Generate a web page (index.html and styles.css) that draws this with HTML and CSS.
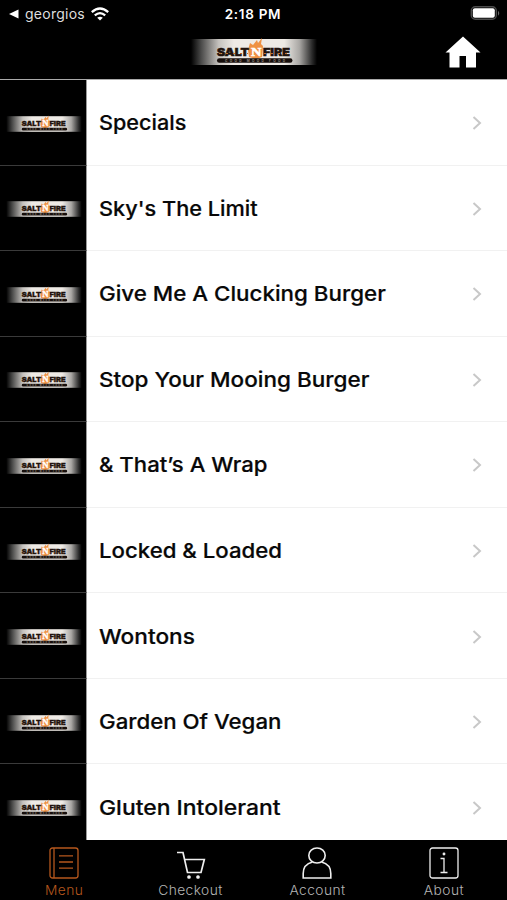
FILE: index.html
```
<!DOCTYPE html>
<html lang="en">
<head>
<meta charset="utf-8">
<title>Salt N Fire</title>
<link rel="stylesheet" href="styles.css">
</head>
<body>
<svg class="defs" width="0" height="0" aria-hidden="true">
  <defs>
    <linearGradient id="plate" x1="0" x2="1" y1="0" y2="0">
      <stop offset="0" stop-color="#000"/>
      <stop offset=".08" stop-color="#4a4a49"/>
      <stop offset=".22" stop-color="#c5c2be"/>
      <stop offset=".34" stop-color="#eeeae5"/>
      <stop offset=".74" stop-color="#eeeae5"/>
      <stop offset=".86" stop-color="#aaa8a5"/>
      <stop offset=".96" stop-color="#2b2b2b"/>
      <stop offset="1" stop-color="#000"/>
    </linearGradient>
    <symbol id="logo" viewBox="0 0 126 30">
      <rect y="2" width="126" height="26" fill="url(#plate)"/>
      <path d="M57 13L59 6L62 8L66 3L67 6L71 1L70 7L72 9L71 20L65 22L58 20Z" fill="#ef9143"/>
      <g class="logo-word">
        <text x="26" y="18.500" textLength="32" lengthAdjust="spacingAndGlyphs">SALT</text>
        <text x="72" y="18.500" textLength="27" lengthAdjust="spacingAndGlyphs">FIRE</text>
      </g>
      <path d="M28 16.500h29M73 16.500h25" stroke="#c46b2c" stroke-width="1" stroke-dasharray="2 5"/>
      <text class="logo-n" x="60" y="19" textLength="10.500" lengthAdjust="spacingAndGlyphs">N</text>
      <rect x="26" y="21.200" width="75.500" height="4.600" rx="2.200" fill="#160e0b"/>
      <text class="logo-tag" x="34" y="24.800" textLength="60">GOOD MOOD FOOD</text>
    </symbol>
    <symbol id="chevron" viewBox="0 0 10 16"><path d="M1.500 2L8 8L1.500 14" fill="none" stroke="#c8c8c8" stroke-width="2"/></symbol>
  </defs>
</svg>
<div class="app">
  <div class="status">
    <div class="back">
      <svg width="10" height="10" viewBox="0 0 10 10"><path d="M0 5L9.500 .5v9z" fill="#fff"/></svg>
      <span class="back-name">georgios</span>
      <svg class="wifi" width="18" height="14" viewBox="0 0 18 14"><g fill="none" stroke="#fff" stroke-width="2.300"><path d="M.8 5.200Q9-2.200 17.200 5.200"/><path d="M3.800 8.400Q9 3.800 14.200 8.400"/></g><path d="M9 13.500L6.200 10.700Q9 8.600 11.800 10.700Z" fill="#fff"/></svg>
    </div>
    <span class="time">2:18 PM</span>
    <svg class="battery" width="31" height="15" viewBox="0 0 31 15"><rect x="1.300" y=".8" width="25" height="12.500" rx="4" fill="none" stroke="#4c4c4c" stroke-width="1.400"/><rect x="2.800" y="2.300" width="22" height="9.500" rx="2" fill="#fff"/><path d="M28 4.800q2.500 2.500 0 5z" fill="#666"/></svg>
  </div>
  <header class="header">
    <span></span>
    <svg class="brand" width="126" height="30"><use href="#logo"/></svg>
    <svg class="home" width="36" height="32" viewBox="0 0 36 32"><path d="M18 .5L35.500 16.500H31V31.500H21V20H14.500V31.500H4.500V16.500H.5Z" fill="#fff"/></svg>
  </header>
  <main class="list">
    <div class="row"><div class="thumb"><svg width="76" height="18"><use href="#logo"/></svg></div><div class="item"><span class="name w1">Specials</span><svg width="10" height="16"><use href="#chevron"/></svg></div></div>
    <div class="row"><div class="thumb"><svg width="76" height="18"><use href="#logo"/></svg></div><div class="item"><span class="name w2">Sky's The Limit</span><svg width="10" height="16"><use href="#chevron"/></svg></div></div>
    <div class="row"><div class="thumb"><svg width="76" height="18"><use href="#logo"/></svg></div><div class="item"><span class="name w3">Give Me A Clucking Burger</span><svg width="10" height="16"><use href="#chevron"/></svg></div></div>
    <div class="row"><div class="thumb"><svg width="76" height="18"><use href="#logo"/></svg></div><div class="item"><span class="name w4">Stop Your Mooing Burger</span><svg width="10" height="16"><use href="#chevron"/></svg></div></div>
    <div class="row"><div class="thumb"><svg width="76" height="18"><use href="#logo"/></svg></div><div class="item"><span class="name w5">&amp; That’s A Wrap</span><svg width="10" height="16"><use href="#chevron"/></svg></div></div>
    <div class="row"><div class="thumb"><svg width="76" height="18"><use href="#logo"/></svg></div><div class="item"><span class="name w6">Locked &amp; Loaded</span><svg width="10" height="16"><use href="#chevron"/></svg></div></div>
    <div class="row"><div class="thumb"><svg width="76" height="18"><use href="#logo"/></svg></div><div class="item"><span class="name w7">Wontons</span><svg width="10" height="16"><use href="#chevron"/></svg></div></div>
    <div class="row"><div class="thumb"><svg width="76" height="18"><use href="#logo"/></svg></div><div class="item"><span class="name w8">Garden Of Vegan</span><svg width="10" height="16"><use href="#chevron"/></svg></div></div>
    <div class="row"><div class="thumb"><svg width="76" height="18"><use href="#logo"/></svg></div><div class="item"><span class="name w9">Gluten Intolerant</span><svg width="10" height="16"><use href="#chevron"/></svg></div></div>
  </main>
  <nav class="tabs">
    <div class="tab active"><svg width="30" height="32" viewBox="0 0 30 32"><rect x="1" y="1" width="28" height="30" rx="2.500"/><path d="M5 1v30M10 8.800h14M10 15h14M10 21.200h14"/></svg><span>Menu</span></div>
    <div class="tab"><svg width="30" height="32" viewBox="0 0 30 32"><g stroke-width="1.700"><path d="M1 5.500h6l4.500 20h13.500L28.300 12.500H8.500"/></g><circle cx="13" cy="30" r="1.200" fill="#fff"/><circle cx="22" cy="30" r="1.200" fill="#fff"/></svg><span>Checkout</span></div>
    <div class="tab"><svg width="30" height="32" viewBox="0 0 30 32"><g stroke-width="1.600"><ellipse cx="15" cy="8.500" rx="8.200" ry="7.500"/><path d="M10.500 15C4.500 16.500 1.200 21 1.200 26.500V31H28.800V26.500C28.800 21 25.500 16.500 19.500 15"/></g></svg><span>Account</span></div>
    <div class="tab"><svg width="30" height="32" viewBox="0 0 30 32"><rect x="1" y="1" width="28" height="30" rx="2.500"/><path d="M11.500 11.500h3.500v14M11.500 25.500h7"/><circle cx="15" cy="7" r=".8" fill="#fff"/></svg><span>About</span></div>
  </nav>
</div>
</body>
</html>
```

FILE: styles.css
```
* { box-sizing: border-box; }
body { margin: 0; background: #000; font-family: Inter, "Liberation Sans", sans-serif; }
svg { display: block; flex: none; }
.defs { position: absolute; }
.app { width: 507px; height: 900px; display: flex; flex-direction: column; overflow: hidden; }
.status { height: 28px; padding: 0 6px 0 9px; display: grid; grid-template-columns: 1fr auto 1fr; align-items: center; color: #fff; }
.back { display: flex; align-items: center; gap: 6px; margin-top: -1px; }
.back-name { font-size: 14px; letter-spacing: .25px; color: #dedede; line-height: 20px; }
.time { margin-right: 4px; font-size: 13.500px; font-weight: 600; letter-spacing: .7px; line-height: 20px; }
.battery { justify-self: end; margin-top: -1px; }
.header { height: 52px; padding-right: 26px; border-bottom: 1px solid #aaa; display: grid; grid-template-columns: 191px 1fr auto; align-items: start; }
.brand { margin-top: 9px; }
.home { margin-top: 8px; }
.list { height: 760px; overflow: hidden; background: #fff; }
.row { height: 85.560px; display: flex; }
.thumb { width: 87px; padding: 3px 0 0 6px; display: flex; align-items: center; background: #000; border-right: 1px solid #999; border-bottom: 1px solid #3a3a3a; }
.item { flex: 1; padding: 2px 25px 0 12px; display: flex; align-items: center; justify-content: space-between; border-bottom: 1px solid #f1f1f1; }
.name { font-size: 20.500px; line-height: 28px; font-weight: 500; color: #080808; white-space: nowrap; transform-origin: left center; -webkit-text-stroke: .2px #080808; }
.w1 { transform: scaleX(1.055); }
.w2 { transform: scaleX(1.06); }
.w3 { transform: scaleX(1.09); }
.w4 { transform: scaleX(1.098); }
.w5 { transform: scaleX(1.08); }
.w6 { transform: scaleX(1.083); }
.w7 { transform: scaleX(1.105); }
.w8 { transform: scaleX(1.085); }
.w9 { transform: scaleX(1.117); }
.tabs { height: 60px; padding: 7px 0 0 1px; display: grid; grid-template-columns: repeat(4, 126.500px); color: #b4b4b4; }
.tab { display: flex; flex-direction: column; align-items: center; }
.tab svg { fill: none; stroke: #eee; stroke-width: 1.300; }
.tab span { margin-top: 3px; font-size: 13px; line-height: 16px; font-weight: 300; letter-spacing: .4px; white-space: nowrap; transform: scaleX(1.06); }
.tab.active { color: #b5571d; }
.tab.active svg { stroke: #b5571d; }
.logo-word { font: 900 10.500px Inter, sans-serif; fill: #21130d; stroke: #21130d; stroke-width: .5px; }
.logo-n { font: 900 13px "Liberation Serif", serif; fill: #fff; stroke: #fff; stroke-width: .5px; }
.logo-tag { font: 700 3.200px Inter, sans-serif; fill: #92877f; }
```
